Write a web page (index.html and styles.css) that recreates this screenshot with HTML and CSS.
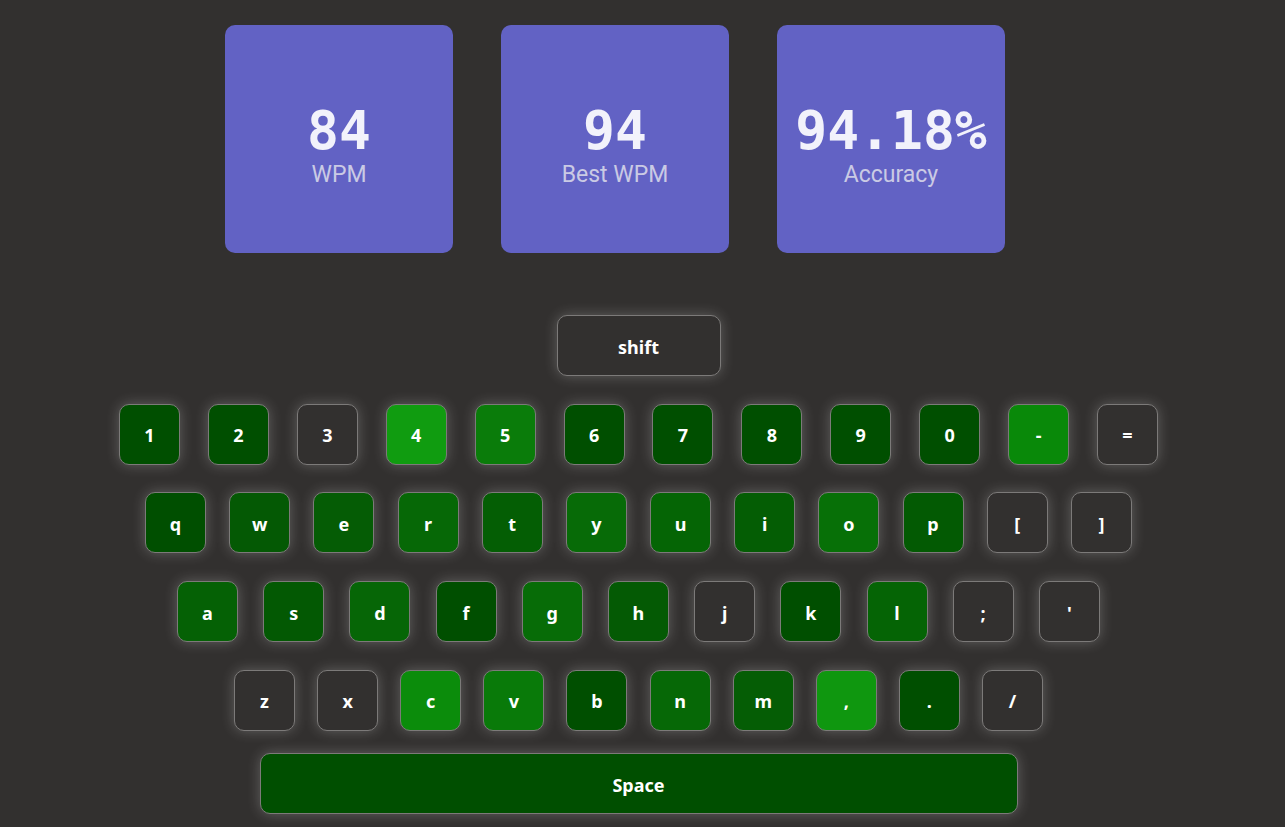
FILE: index.html
```html
<!DOCTYPE html>
<html>
<head>
<meta charset="utf-8">
<link rel="stylesheet" href="styles.css">
</head>
<body>
<div class="stats">
  <div class="card"><div class="num">84</div><div class="lbl">WPM</div></div>
  <div class="card"><div class="num">94</div><div class="lbl">Best WPM</div></div>
  <div class="card"><div class="num">94.18%</div><div class="lbl">Accuracy</div></div>
</div>
<div class="keyboard">
  <div class="key wide">shift</div>
  <div class="row r1">
    <div class="key g0">1</div><div class="key g0">2</div><div class="key">3</div><div class="key g4">4</div><div class="key g5">5</div><div class="key g0">6</div><div class="key g0">7</div><div class="key g0">8</div><div class="key g0">9</div><div class="key g0">0</div><div class="key g6">-</div><div class="key">=</div>
  </div>
  <div class="row r2">
    <div class="key g0">q</div><div class="key gw">w</div><div class="key ge">e</div><div class="key gr">r</div><div class="key gt">t</div><div class="key gy">y</div><div class="key gu">u</div><div class="key gi">i</div><div class="key go">o</div><div class="key gp">p</div><div class="key">[</div><div class="key">]</div>
  </div>
  <div class="row r3">
    <div class="key ga">a</div><div class="key gs">s</div><div class="key gd">d</div><div class="key g0">f</div><div class="key gg">g</div><div class="key gh">h</div><div class="key">j</div><div class="key g0">k</div><div class="key gl">l</div><div class="key">;</div><div class="key">'</div>
  </div>
  <div class="row r4">
    <div class="key">z</div><div class="key">x</div><div class="key gc">c</div><div class="key gv">v</div><div class="key g0">b</div><div class="key gn">n</div><div class="key gm">m</div><div class="key gcomma">,</div><div class="key g0">.</div><div class="key">/</div>
  </div>
  <div class="key space g0">Space</div>
</div>
</body>
</html>
```

FILE: styles.css
```css
html, body {
  margin: 0;
  padding: 0;
  background: #32302f;
  height: 100%;
  overflow: hidden;
}
body {
  font-family: "Noto Sans", "Open Sans", sans-serif;
}
.stats {
  display: flex;
  gap: 48px;
  padding: 25px 0 0 225px;
}
.card {
  box-sizing: border-box;
  width: 228px;
  height: 228px;
  padding-top: 12px;
  background: #6262c4;
  border-radius: 10px;
  display: flex;
  flex-direction: column;
  align-items: center;
  justify-content: center;
}
.num {
  font-family: "DejaVu Sans Mono", monospace;
  font-weight: bold;
  font-size: 53px;
  line-height: 60px;
  color: #f2f2fb;
}
.lbl {
  font-family: Roboto, sans-serif;
  font-size: 23px;
  line-height: 28px;
  color: #cacae4;
}
.keyboard {
  width: 1277px;
  display: flex;
  flex-direction: column;
  align-items: center;
  gap: 27.7px;
  margin-top: 62px;
}
.row {
  display: flex;
  justify-content: space-between;
}
.r1 { width: 1039px; }
.r2 { width: 987px; }
.r3 { width: 923px; }
.r4 { width: 809px; }
.key {
  box-sizing: border-box;
  width: 61px;
  height: 61px;
  border: 1px solid #7c7a79;
  border-radius: 10px;
  background: #32302f;
  box-shadow: 0 0 14px rgba(255, 255, 255, 0.24);
  color: #ffffff;
  font-weight: 700;
  font-size: 18px;
  display: flex;
  align-items: center;
  justify-content: center;
  padding-top: 2px;
}
.key.wide {
  width: 164px;
}
.key.space {
  width: 758px;
  margin-top: -5px;
}
.g0 { background: #004f00; }
.g4 { background: #109c10; }
.g5 { background: #0a7c0a; }
.g6 { background: #098909; }
.gw { background: #045904; }
.ge { background: #055c05; }
.gr { background: #066806; }
.gt { background: #045e04; }
.gy { background: #076b07; }
.gu { background: #056505; }
.gi { background: #045d04; }
.go { background: #077007; }
.gp { background: #035a03; }
.ga { background: #056105; }
.gs { background: #035903; }
.gd { background: #066606; }
.gg { background: #076c07; }
.gh { background: #045a04; }
.gl { background: #056405; }
.gc { background: #0b8c0b; }
.gv { background: #097a09; }
.gn { background: #066806; }
.gm { background: #055d05; }
.gcomma { background: #0f970f; }
```
